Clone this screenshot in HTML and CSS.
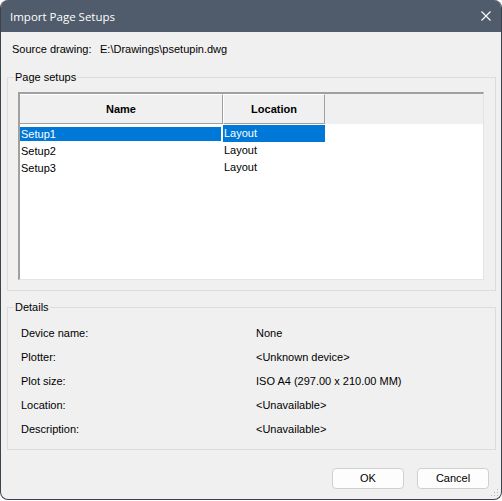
FILE: index.html
```html
<!DOCTYPE html>
<html>
<head>
<meta charset="utf-8">
<title>Import Page Setups</title>
<link rel="stylesheet" href="styles.css">
</head>
<body>
<div class="window">
  <div class="titlebar">
    <span class="title">Import Page Setups</span>
    <svg class="close" width="10" height="10" viewBox="0 0 10 10"><path d="M0.5 0.5 L9.5 9.5 M9.5 0.5 L0.5 9.5" stroke="#ffffff" stroke-width="1.1" fill="none"/></svg>
  </div>
  <div class="client">
    <div class="source">
      <span class="src-label">Source drawing:</span>
      <span class="src-value">E:\Drawings\psetupin.dwg</span>
    </div>
    <fieldset class="group group-setups">
      <legend>Page setups</legend>
      <div class="listbox">
        <div class="lv-header">
          <div class="hcell col-name">Name</div>
          <div class="hcell col-loc">Location</div>
          <div class="hfill"></div>
        </div>
        <div class="lv-row selected">
          <div class="cell c-name">Setup1</div>
          <div class="cell c-loc">Layout</div>
        </div>
        <div class="lv-row">
          <div class="cell c-name">Setup2</div>
          <div class="cell c-loc">Layout</div>
        </div>
        <div class="lv-row">
          <div class="cell c-name">Setup3</div>
          <div class="cell c-loc">Layout</div>
        </div>
      </div>
    </fieldset>
    <fieldset class="group group-details">
      <legend>Details</legend>
      <div class="details">
        <span>Device name:</span><span>None</span>
        <span>Plotter:</span><span>&lt;Unknown device&gt;</span>
        <span>Plot size:</span><span>ISO A4 (297.00 x 210.00 MM)</span>
        <span>Location:</span><span>&lt;Unavailable&gt;</span>
        <span>Description:</span><span>&lt;Unavailable&gt;</span>
      </div>
    </fieldset>
    <div class="buttons">
      <button class="btn">OK</button>
      <button class="btn">Cancel</button>
    </div>
  </div>
  <svg class="grip" width="10" height="10" viewBox="0 0 10 10">
    <rect x="8" y="2" width="1" height="1" fill="#b8b8b8"/>
    <rect x="5" y="5" width="1" height="1" fill="#b8b8b8"/>
    <rect x="8" y="5" width="1" height="1" fill="#b8b8b8"/>
    <rect x="2" y="8" width="1" height="1" fill="#b8b8b8"/>
    <rect x="5" y="8" width="1" height="1" fill="#b8b8b8"/>
    <rect x="8" y="8" width="1" height="1" fill="#b8b8b8"/>
  </svg>
</div>
</body>
</html>
```

FILE: styles.css
```css
html, body {
  margin: 0;
  padding: 0;
  background: #ffffff;
}

.window {
  position: relative;
  box-sizing: border-box;
  width: 502px;
  height: 500px;
  background: #f0f0f0;
  border: 1px solid #3a434e;
  border-top: 0;
  border-radius: 8px;
  overflow: hidden;
  font-family: "Liberation Sans", Arial, sans-serif;
  font-size: 11px;
  color: #000000;
}

.titlebar {
  height: 32px;
  background: #505c6b;
  display: flex;
  align-items: center;
  justify-content: space-between;
  padding: 0 10px 0 9px;
  margin: 0 -1px;
  padding-left: 10px;
  padding-right: 11px;
}

.title {
  font-family: "Open Sans", "Noto Sans", sans-serif;
  font-size: 11.5px;
  color: #ffffff;
  line-height: 16px;
  padding-top: 1px;
}

.close {
  display: block;
}

.client {
  padding: 0 5px 0 6px;
}

.source {
  display: flex;
  margin-top: 10px;
  line-height: 14px;
  padding-left: 5px;
}

.src-label {
  width: 88px;
}

.group {
  margin: 0;
  padding: 0;
  border: 1px solid #dcdcdc;
  min-width: 0;
}

.group legend {
  margin-left: 6px;
  padding: 0 1px;
  line-height: 14px;
}

.group-setups {
  margin-top: 14px;
}

.listbox {
  box-sizing: border-box;
  width: 466px;
  height: 188px;
  margin: 8px 10px 10px 10px;
  background: #ffffff;
  border-top: 2px solid #a0a0a0;
  border-left: 2px solid #a0a0a0;
  border-right: 1px solid #e3e3e3;
  border-bottom: 1px solid #e3e3e3;
}

.lv-header {
  display: flex;
  height: 30px;
  background: #f0f0f0;
}

.hcell {
  box-sizing: border-box;
  height: 30px;
  border-top: 1px solid #ffffff;
  border-left: 1px solid #ffffff;
  border-right: 1px solid #a0a0a0;
  border-bottom: 1px solid #a0a0a0;
  font-weight: bold;
  text-align: center;
  line-height: 28px;
}

.hcell.col-name {
  width: 203px;
  border-left: 0;
}

.hcell.col-loc {
  width: 102px;
}

.hfill {
  flex: 1;
}

.lv-row {
  display: flex;
  height: 17px;
}

.lv-row:first-of-type {
  margin-top: 1px;
}

.lv-header + .lv-row {
  margin-top: 1px;
}

.cell {
  box-sizing: border-box;
  padding-left: 1px;
  white-space: nowrap;
}

.c-name {
  width: 201px;
  height: 14px;
  line-height: 14px;
  margin: 2px 2px 1px 0;
}

.c-loc {
  width: 102px;
  height: 17px;
  line-height: 17px;
}

.lv-row.selected .cell {
  background: #0078d7;
  color: #ffffff;
}

.group-details {
  margin-top: 9px;
}

.details {
  display: grid;
  grid-template-columns: 235px 1fr;
  grid-auto-rows: 24px;
  align-items: center;
  padding: 7px 0 8px 13px;
  line-height: 14px;
}

.buttons {
  display: flex;
  justify-content: flex-end;
  gap: 13px;
  margin-top: 18px;
  padding-right: 7px;
}

.btn {
  box-sizing: border-box;
  width: 72px;
  height: 21px;
  padding: 0;
  background: #fdfdfd;
  border: 1px solid #d0d0d0;
  border-radius: 4px;
  font-family: "Liberation Sans", Arial, sans-serif;
  font-size: 11px;
  color: #000000;
  line-height: 19px;
}

.grip {
  position: absolute;
  right: 2px;
  bottom: 2px;
}
```
